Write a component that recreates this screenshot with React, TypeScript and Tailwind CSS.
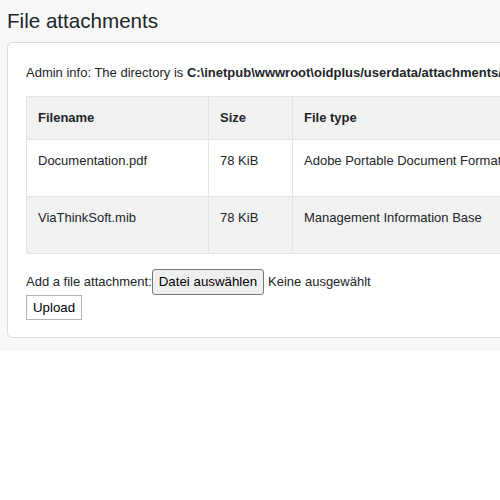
import React from 'react';

const rows = [
  { name: 'Documentation.pdf', size: '78 KiB', type: 'Adobe Portable Document Format' },
  { name: 'ViaThinkSoft.mib', size: '78 KiB', type: 'Management Information Base' },
];

export default function App() {
  return (
    <div className="w-[500px] h-[500px] overflow-hidden bg-white font-['Liberation_Sans',Arial,sans-serif] text-[#212529]">
      <div className="h-[351px] bg-[#f8f8f8] pl-[7px] pt-[6px]">
        <h1 className="text-[20.6px] leading-[30px] font-normal mb-[6px]">File attachments</h1>
        <div className="w-[700px] h-[296px] bg-white border border-[#dcdcdc] rounded-[5px] pt-[20px] pl-[18px]">
          <p className="text-[13px] leading-[20px] whitespace-nowrap">
            Admin info: The directory is <b>C:\inetpub\wwwroot\oidplus/userdata/attachments/</b>
          </p>
          <table className="mt-[13px] w-[640px] border-collapse text-[13px] table-fixed">
            <colgroup>
              <col className="w-[182px]" />
              <col className="w-[84px]" />
              <col />
            </colgroup>
            <thead>
              <tr className="bg-[#f2f2f2] h-[43px]">
                <th className="border border-[#e2e5e5] px-[11px] text-left font-bold align-middle">Filename</th>
                <th className="border border-[#e2e5e5] px-[11px] text-left font-bold align-middle">Size</th>
                <th className="border border-[#e2e5e5] px-[11px] text-left font-bold align-middle">File type</th>
              </tr>
            </thead>
            <tbody>
              {rows.map((r, i) => (
                <tr key={r.name} className={i % 2 === 1 ? 'bg-[#f2f2f2] h-[57px]' : 'bg-white h-[57px]'}>
                  <td className="border border-[#e2e5e5] px-[11px] pt-[12px] align-top leading-[18px]">{r.name}</td>
                  <td className="border border-[#e2e5e5] px-[11px] pt-[12px] align-top leading-[18px]">{r.size}</td>
                  <td className="border border-[#e2e5e5] px-[11px] pt-[12px] align-top leading-[18px] whitespace-nowrap">{r.type}</td>
                </tr>
              ))}
            </tbody>
          </table>
          <div className="mt-[15px] text-[13px] flex items-center">
            <span>Add a file attachment:</span>
            <span className="border border-[#767676] bg-[#efefef] rounded-[3px] h-[26px] px-[6px] flex items-center text-[13.3px] text-black">Datei auswählen</span>
            <span className="ml-[4px]">Keine ausgewählt</span>
          </div>
          <button className="-mt-[1px] border border-[#b3b3b3] bg-white h-[25px] px-[6px] text-[13.3px] text-black">Upload</button>
        </div>
      </div>
    </div>
  );
}
